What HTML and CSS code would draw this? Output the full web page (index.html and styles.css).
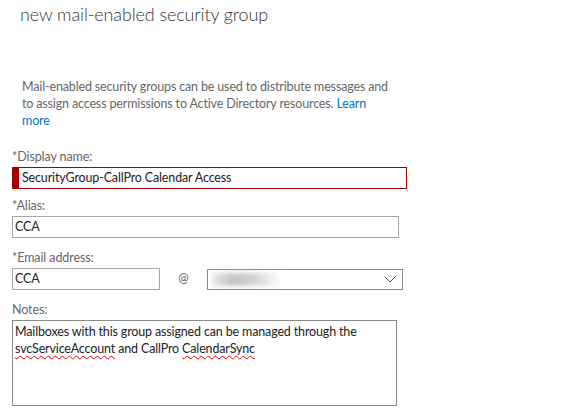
FILE: index.html
```html
<!DOCTYPE html>
<html>
<head>
<meta charset="utf-8">
<link rel="stylesheet" href="styles.css">
</head>
<body>
<div class="page">
  <h1 class="title">new mail-enabled security group</h1>
  <p class="desc">Mail-enabled security groups can be used to distribute messages and to assign access permissions to Active Directory resources. <a class="link" href="#">Learn more</a></p>
  <div class="form">
    <div class="field f-display">
      <label class="label">*Display name:</label>
      <div class="input input-error">SecurityGroup-CallPro Calendar Access</div>
    </div>
    <div class="field f-alias">
      <label class="label">*Alias:</label>
      <div class="input input-alias">CCA</div>
    </div>
    <div class="field f-email">
      <label class="label">*Email address:</label>
      <div class="email-row">
        <div class="input input-email">CCA</div>
        <span class="at">@</span>
        <div class="select">
          <span class="blur"></span>
          <svg class="chev" width="12" height="7" viewBox="0 0 12 7"><path d="M0.5 0.5 L6 6 L11.5 0.5" fill="none" stroke="#555" stroke-width="1"/></svg>
        </div>
      </div>
    </div>
    <div class="field f-notes">
      <label class="label">Notes:</label>
      <div class="textarea">Mailboxes with this group assigned can be managed through the <span class="spell">svcServiceAccount</span> and CallPro <span class="spell">CalendarSync</span></div>
    </div>
  </div>
</div>
</body>
</html>
```
FILE: styles.css
```css
html, body {
  margin: 0;
  padding: 0;
  background: #fff;
}
body {
  font-family: Lato, "Open Sans", sans-serif;
  color: #333;
  width: 585px;
  height: 415px;
  overflow: hidden;
}
.title {
  margin: 0;
  padding: 2px 0 0 20px;
  font-size: 18px;
  letter-spacing: -0.12px;
  font-weight: 300;
  color: #333;
  line-height: 24px;
  height: 76px;
}
.desc {
  margin: 0 0 0 22px;
  width: 369px;
  font-size: 12.5px;
  letter-spacing: -0.15px;
  line-height: 17px;
  color: #666;
}
.link {
  color: #0072c6;
  text-decoration: none;
}
.form {
  padding: 20px 0 0 12px;
}
.label {
  display: block;
  font-size: 12.5px;
  letter-spacing: -0.1px;
  line-height: 16px;
  color: #666;
  height: 18px;
}
.input {
  box-sizing: border-box;
  height: 22px;
  border: 1px solid #a6a6a6;
  font-size: 12.5px;
  letter-spacing: -0.15px;
  line-height: 20px;
  padding: 0 6px;
  color: #222;
  white-space: nowrap;
}
.input-error {
  width: 395px;
  border-color: #a80000;
  border-left: 7px solid #a80000;
  padding-left: 3px;
  margin-bottom: 9px;
}
.input-alias {
  width: 387px;
  padding-left: 2px;
  margin-bottom: 12px;
}
.email-row {
  display: flex;
  align-items: center;
}
.input-email {
  width: 148px;
  padding-left: 2px;
}
.at {
  width: 47px;
  text-align: center;
  font-size: 12.5px;
  color: #666;
  margin-top: -3px;
}
.select {
  box-sizing: border-box;
  width: 196px;
  height: 21px;
  border: 1px solid #8a8a8a;
  display: flex;
  align-items: center;
  justify-content: space-between;
  padding: 0 6px 0 4px;
}
.blur {
  width: 70px;
  height: 13px;
  background: linear-gradient(90deg, rgba(200,200,200,0.4), rgba(190,190,190,0.9) 30%, rgba(200,200,200,0.8) 60%, rgba(255,255,255,0));
  filter: blur(2px);
}
.f-email {
  margin-bottom: 12px;
}
.textarea {
  box-sizing: border-box;
  width: 385px;
  height: 86px;
  border: 1px solid #8a8a8a;
  padding: 2px 2px;
  font-size: 12.5px;
  letter-spacing: -0.15px;
  line-height: 17px;
  color: #222;
}
.spell {
  text-decoration: underline wavy #e00;
  text-decoration-thickness: 1px;
  text-underline-offset: 2px;
}
```
